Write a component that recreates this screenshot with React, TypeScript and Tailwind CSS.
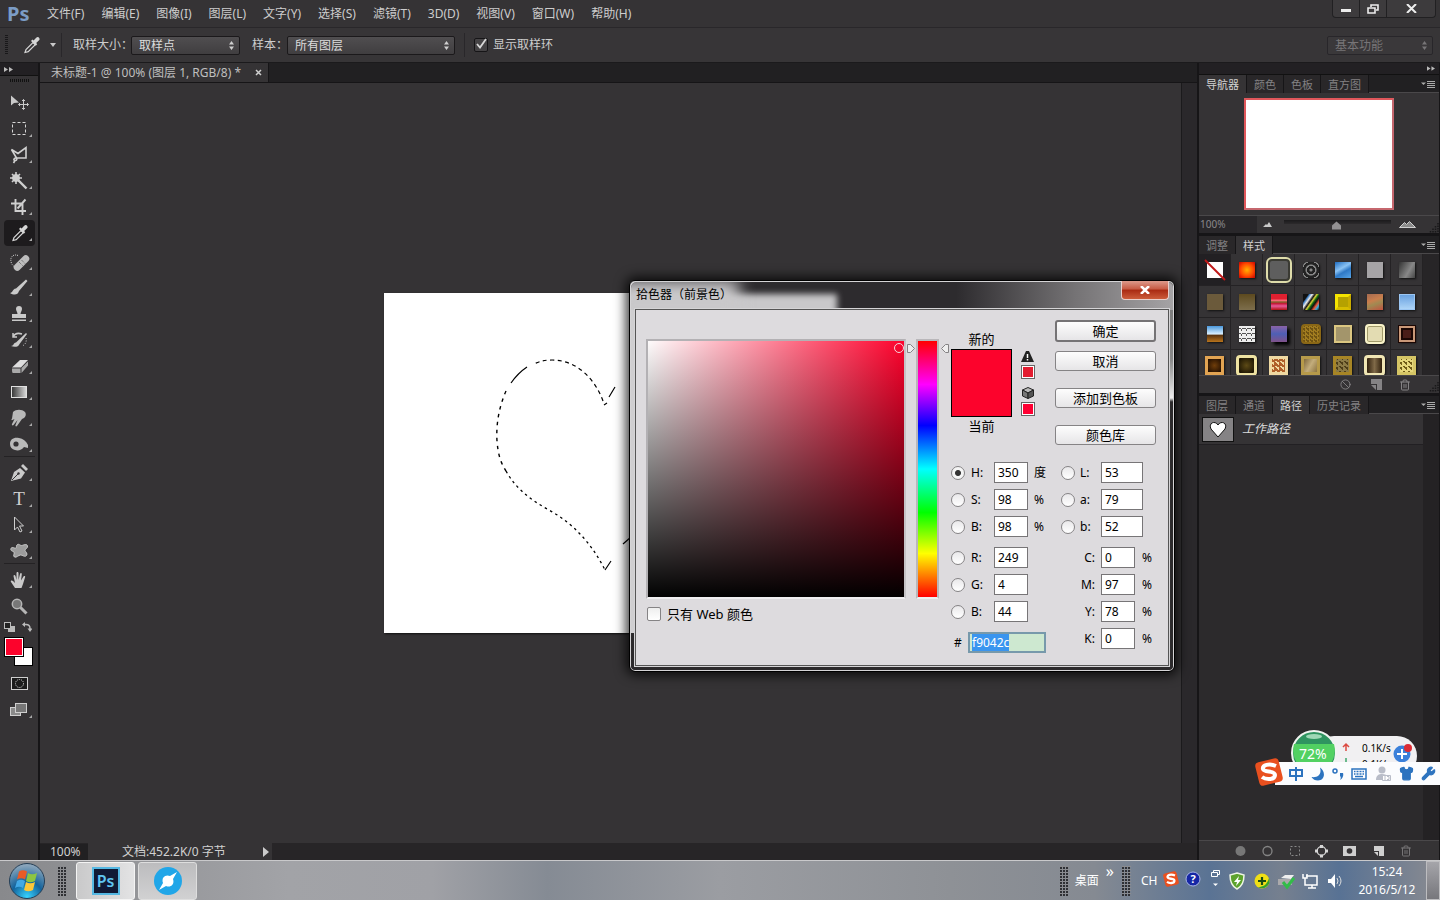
import { useEffect, useRef, type ReactNode } from "react";
import { Ban, Trash2, Wrench, Shirt } from "lucide-react";

const menus = ["文件(F)", "编辑(E)", "图像(I)", "图层(L)", "文字(Y)", "选择(S)", "滤镜(T)", "3D(D)", "视图(V)", "窗口(W)", "帮助(H)"];

const Dropper = () => (
  <g>
    <path d="M9 20.5l1-3 7-7 2.2 2.2-7 7z" fill="none" stroke="#d6d6d6" strokeWidth="1.2" />
    <path d="M15 9l1.4-1.4 1.2 1 2.6-2.8c1-1 2.4-1 3 .1.7.9.4 2-.4 2.7l-2.6 2.4 1 1.2-1.4 1.5z" fill="#d6d6d6" />
  </g>
);

type Tool = { name: string; icon: ReactNode; selected?: boolean; plain?: boolean; line?: boolean };

const tools: Tool[] = [
  {
    name: "移动",
    plain: true,
    icon: (
      <g>
        <path d="M7 5.500v10l3-2.600 5-.400z" fill="#c9c9c9" />
        <path d="M19.500 9.500v10M14.500 14.500h10M18 11l1.500-1.500L21 11M18 18l1.500 1.500L21 18M16 13l-1.500 1.500L16 16M23 13l1.500 1.500L23 16" fill="none" stroke="#c9c9c9" />
      </g>
    ),
  },
  { name: "选框", icon: <rect x="8.5" y="6.5" width="13" height="12" fill="none" stroke="#d6d6d6" strokeDasharray="3 2" /> },
  { name: "套索", icon: <path d="M7.500 7.500l6.500 4 8-6v10.500h-9.500zM12.500 16c-3-.500-3.500 3-1 2.500 1.500-.500 1.500-1.500 1-2.500M11 18.500l-1.500 2.500" fill="none" stroke="#d0d0d0" strokeWidth="1.6" /> },
  {
    name: "魔棒",
    icon: (
      <g stroke="#cfcfcf">
        <path d="M12 4v12M6 10h12M8 6l8 8M16 6l-8 8" strokeWidth="1.600" />
        <circle cx="12" cy="10" r="3.500" fill="#cfcfcf" />
        <path d="M14.500 12.500l8 8" strokeWidth="2.400" />
      </g>
    ),
  },
  { name: "裁剪", icon: <path d="M7 9.500h11.500V21M11.500 5v12H22M13.500 14.500l8-9" fill="none" stroke="#cfcfcf" strokeWidth="1.900" /> },
  { name: "吸管", selected: true, icon: <Dropper /> },
  {
    name: "修复",
    icon: (
      <g>
        <path d="M14 6.500c-5-2-8 2-7 6 .500 3 2 4 3 5" fill="none" stroke="#cdcdcd" strokeDasharray="1 1" />
        <rect x="8" y="10.500" width="19" height="7" rx="3.500" transform="rotate(-45 17.500 14)" fill="#bdbdbd" />
        <path d="M15 13l3.500 3.500M17.500 11l3.500 3.500M14 17h.1M21 10h.1" stroke="#555" strokeDasharray="1 1" />
      </g>
    ),
  },
  { name: "画笔", icon: <path d="M6 18c3 0 2-4 6-4.500l10-9 1.500 1.500L15 16c-1 4-5 4.500-9 2z" fill="#c9c9c9" /> },
  { name: "图章", icon: <path d="M15 5a3 3 0 0 1 3 3c0 2-1.500 3-1.500 5H22v4H8v-4h5.500c0-2-1.500-3-1.500-5a3 3 0 0 1 3-3zM8 18.500h14V20H8z" fill="#c9c9c9" /> },
  {
    name: "历史画笔",
    icon: (
      <g>
        <path d="M7 19c3 0 2-3 5-3.500L22 6l1 1-7.500 10c-1 3-5 3.500-8.500 2z" fill="#c9c9c9" />
        <path d="M9 10c2-4 6-4 9-3M9 6v4h4" fill="none" stroke="#c9c9c9" strokeWidth="1.500" />
        <path d="M22 11c1 4-1 7-4 8" fill="none" stroke="#c9c9c9" strokeDasharray="1 1.500" />
      </g>
    ),
  },
  {
    name: "橡皮擦",
    icon: (
      <g>
        <path d="M8 14.500L16 7h8l-7 7.500z" fill="#dedede" />
        <path d="M8 15.500h8.500V20H9c-1 0-1-2-1-4.500zM17.500 15L24 8.500v4L17.500 20z" fill="#a9a9a9" />
      </g>
    ),
  },
  { name: "渐变", icon: <rect x="7.500" y="7.500" width="15" height="11" fill="url(#toolFade)" stroke="#e0e0e0" /> },
  { name: "涂抹", icon: <path d="M9 7c3-3 9-3 12 0 2 3 0 6-3 7l-5 7c-1 1-2 0-1.500-1l2-5-4 5c-1 1-2 0-1.500-1l2.500-5-2 1c-1 .500-1.500-.500-.500-1.500z" fill="#b9b9b9" /> },
  {
    name: "减淡",
    icon: (
      <g>
        <path d="M6 13c0-5 4-7 9-6 4 .500 7 3 9 7v3l-4-1c-2 3-6 4-9 3-3-.500-5-3-5-6z" fill="#b9b9b9" />
        <circle cx="12" cy="13" r="2.600" fill="#353335" />
      </g>
    ),
    line: true,
  },
  {
    name: "钢笔",
    icon: (
      <g>
        <path d="M7 21l3-9 6-4 5 4.500-4 6z" fill="#c9c9c9" />
        <path d="M17 6l2-2 5 5-2 2z" fill="#c9c9c9" />
        <path d="M8 20l6-6" stroke="#353335" />
        <circle cx="14.500" cy="13.500" r="1.200" fill="#353335" />
      </g>
    ),
  },
  { name: "文字", icon: <text x="15" y="19" textAnchor="middle" fontSize="19" fontFamily="Liberation Serif, serif" fill="#d0d0d0">T</text> },
  { name: "路径选择", icon: <path d="M10.500 5v13l3-3 2.500 5 2-1-2.500-5h4z" fill="none" stroke="#cfcfcf" /> },
  { name: "形状", line: true, icon: <path d="M13 7c1.500-2 3.500 1 5 .500s5-2 5.500.500-3 3-2.500 4.500 3 3 1.500 5-4-.500-6-.500-4 3-6 2 .500-4-.500-5-4-1-3-3.500 4 .500 5-.500 0-2 1-3z" fill="#9c9c9c" stroke="#c9c9c9" /> },
  { name: "抓手", icon: <path d="M11 21l-4-6c-1-1.500 1-2 2-1l2 2-1.500-7c0-1.500 1.500-1.500 2 0l1 4V6c0-1.500 2-1.500 2 0v7l1.500-6c.500-1.500 2-1 1.800.500l-.800 6 2.500-4c1-1 2.200-.300 1.500 1L19 17l-1.500 4z" fill="#c9c9c9" /> },
  {
    name: "缩放",
    plain: true,
    icon: (
      <g>
        <path d="M16.500 14.500l6 6" stroke="#b5b5b5" strokeWidth="3" />
        <circle cx="13" cy="11" r="4.700" fill="#777" stroke="#b5b5b5" strokeWidth="1.500" />
      </g>
    ),
  },
];

const styleSwatches = [
  "bg-[radial-gradient(#ffb000,#ff4a00_55%,#c80000)]",
  "bg-[#5e5e5e] border-2 border-[#3a3a33] outline-2 outline-[#dedcaa] size-[22px] rounded-sm",
  "bg-[repeating-radial-gradient(circle,#888_0_1px,#222_2px_4px)] rounded-sm",
  "bg-[linear-gradient(150deg,#1e6cc0,#8ac2f3_40%,#2e79c7_60%,#58a5e8)]",
  "bg-[#a6a4a6]",
  "bg-[linear-gradient(120deg,#333,#888_60%,#444)]",
  "bg-[#6b5a3b]",
  "bg-[linear-gradient(#5d4a1f,#7d6e4c)]",
  "bg-[linear-gradient(#e02030_30%,#ff6a7a_40%,#80652a_50%,#c81838_60%,#e85b9a_75%,#b01010)]",
  "bg-[linear-gradient(125deg,#111_20%,#3a7ac0_25%,#eee_35%,#111_45%,#ddd33a_52%,#161_60%,#111_68%,#e53_78%,#3ad_88%,#111)]",
  "bg-[#b5a100] border-[3px] border-[#f5e400] border-r-[#c9ac00] border-b-[#d7bd00]",
  "bg-[linear-gradient(160deg,#a56a50,#c97f4d_40%,#a08a52_60%,#c2523f)]",
  "bg-[linear-gradient(#6aa2e0,#add4f7)] border border-[#9cc6f2]",
  "bg-[linear-gradient(#4a98dc,#d9efff_50%,#5a3410_58%,#b9741c)]",
  "bg-[repeating-conic-gradient(#eee_0_19%,#555_20%_27%)] bg-size-[5px_5px]",
  "bg-[linear-gradient(#8a63a8,#4d5fb5_50%,#80528a)] shadow-[3px_3px_3px_#000]",
  "bg-[repeating-conic-gradient(#a17c20_0_18%,#6f5212_19%_35%)] bg-size-[4px_4px] border-2 border-[#8a6716] size-5 rounded-sm",
  "bg-[#a3956b] border-2 border-[#dbc681] size-[18px]",
  "bg-[#e3dcb2] border-2 border-[#f8f2c8] size-5 rounded-sm inset-ring-1 inset-ring-[#a19a6a]",
  "bg-[#4a1d18] border-2 border-[#c99878] outline-1 outline-[#1b0704] inset-ring-2 inset-ring-[#1b0704]",
  "bg-[radial-gradient(#6f3d0a,#1d0c00)] border-[3px] border-[#e2a452] size-[19px]",
  "bg-[radial-gradient(#5d4a16,#130d00)] border-[3px] border-[#eee2a2] size-[21px] rounded-sm",
  "bg-[repeating-conic-gradient(#b0602a_0_18%,#f0d9a0_19%_35%)] bg-size-[5px_5px] border-[3px] border-[#efd9a2] size-[19px]",
  "bg-[linear-gradient(120deg,#81693c,#c3ad7c_50%,#8d7440)] border-[3px] border-[#b69a4a] size-[19px]",
  "bg-[repeating-conic-gradient(#8b7a45_0_18%,#4e3e18_19%_35%)] bg-size-[5px_5px] border-[3px] border-[#a78525] size-[19px]",
  "bg-[linear-gradient(90deg,#31210e,#806a48_50%,#31210e)] border-[3px] border-[#f0e6b4] size-[21px] rounded-sm",
  "bg-[repeating-conic-gradient(#e6d77b_0_18%,#6f5b17_19%_35%)] bg-size-[5px_5px] border-[3px] border-[#d5c565] size-[19px]",
];

function UpDown({ color }: { color: string }) {
  return (
    <svg className="pointer-events-none absolute right-1.5 top-[5px]" width="5" height="9" viewBox="0 0 5 9" fill={color}>
      <path d="M2.500 0L5 3.500H0zM2.500 9L5 5.500H0z" />
    </svg>
  );
}

function BarSelect({ id, value, width, muted }: { id: string; value: string; width: string; muted?: boolean }) {
  return (
    <div className={`relative ${width}`}>
      <select
        id={id}
        aria-label={value}
        className={`block h-[19px] w-full appearance-none rounded-[2px] border pl-[7px] text-xs leading-[18px] outline-none ${
          muted ? "border-[#28262a] bg-[#3a383a] text-[#777577]" : "border-[#1b191b] bg-linear-to-b from-[#504e50] to-[#403e40] text-[#dcdcdc]"
        }`}
      >
        <option>{value}</option>
      </select>
      <UpDown color={muted ? "#777577" : "#cfcfcf"} />
    </div>
  );
}

function Grip({ className = "" }: { className?: string }) {
  return <div className={`h-[30px] w-[9px] bg-[linear-gradient(#8b8c90_1px,transparent_1px),linear-gradient(90deg,#2f3034_2px,transparent_2px)] bg-size-[3px_3px] ${className}`} />;
}

function Tabs({ items, active }: { items: string[]; active: string }) {
  return (
    <div className="flex h-[18px] shrink-0 border-b border-[#4a484a] bg-[#212022] text-[11px] leading-[17px]">
      {items.map((item) => (
        <button
          key={item}
          className={`h-[18px] border-r border-[#161517] px-[7px] ${item === active ? "bg-[#353335] text-[#d2d2d2]" : "bg-[#292729] text-[#838183]"}`}
        >
          {item}
        </button>
      ))}
      <svg className="ml-auto mr-1 mt-1.5" width="14" height="7" viewBox="0 0 14 7">
        <path d="M0 1.500h5L2.500 4z" fill="#aaa" />
        <path d="M6 .5h8M6 2.500h8M6 4.500h8M6 6.500h8" stroke="#aaa" />
      </svg>
    </div>
  );
}

function ResizeDots() {
  return (
    <svg width="10" height="10" viewBox="0 0 10 10" fill="none" stroke="#19181a" strokeWidth="1.500" strokeDasharray="1.500 1">
      <path d="M9 0v10M6.500 3v7M4 5.500V10M1.500 8v2" />
    </svg>
  );
}

function NewPage({ color }: { color: string }) {
  return (
    <svg width="11" height="11" viewBox="0 0 11 11" fill={color}>
      <path d="M0 0h11v11H6V5H0zM0 6h5v5z" />
    </svg>
  );
}

function MenuBar() {
  return (
    <header className="flex h-7 shrink-0 items-center border-b border-[#29272a] bg-[#353335]">
      <span className="w-[39px] pl-[7px] text-xl leading-6 font-bold text-[#7b9cc6]">Ps</span>
      <nav className="flex gap-px text-xs text-[#cdcdcd]">
        {menus.map((m) => (
          <button key={m} className="px-2">
            {m}
          </button>
        ))}
      </nav>
      <div className="mr-1 ml-auto flex h-[18px] self-start overflow-hidden rounded-b-sm border border-t-0 border-[#212022] bg-[#3d3b3d]">
        <button aria-label="最小化" className="flex w-[27px] items-center justify-center border-r border-[#212022]">
          <span className="mt-1 h-[3px] w-2.5 bg-[#ededed]" />
        </button>
        <button aria-label="还原" className="flex w-[27px] items-center justify-center border-r border-[#212022]">
          <svg width="12" height="10" viewBox="0 0 12 10" fill="none" stroke="#ededed" strokeWidth="1.600">
            <path d="M4 3V1h7v5H9M1 4h7v5H1z" />
          </svg>
        </button>
        <button aria-label="关闭" className="flex w-12 items-center justify-center">
          <svg width="11" height="9" viewBox="0 0 11 9" stroke="#ededed" strokeWidth="2">
            <path d="M1 0l9 9M10 0L1 9" />
          </svg>
        </button>
      </div>
    </header>
  );
}

function OptionsBar() {
  return (
    <div className="flex h-[35px] shrink-0 items-center border-b border-[#1b1a1c] bg-[#373537] text-xs whitespace-nowrap text-[#cdcdcd]">
      <div className="ml-[5px] h-5 w-[3px] bg-[repeating-linear-gradient(#19181a_0_1px,transparent_1px_2px)]" />
      <svg className="ml-2" width="32" height="26" viewBox="0 0 32 26">
        <Dropper />
      </svg>
      <svg className="ml-0.5" width="6" height="4" viewBox="0 0 6 4" fill="#c9c9c9">
        <path d="M0 0h6L3 4z" />
      </svg>
      <div className="ml-[5px] mr-[11px] h-6 w-px bg-[#29272a]" />
      <label htmlFor="sample-size" className="w-[58px]">取样大小：</label>
      <BarSelect id="sample-size" value="取样点" width="w-[109px]" />
      <label htmlFor="sample-layer" className="ml-3 w-[35px]">样本：</label>
      <BarSelect id="sample-layer" value="所有图层" width="w-[168px]" />
      <div className="mx-[9px] h-6 w-px bg-[#29272a]" />
      <label className="flex items-center gap-[5px]">
        <span className="relative flex">
          <input type="checkbox" defaultChecked className="size-3.5 appearance-none rounded-[2px] border border-[#161517] bg-[#454345]" />
          <svg className="pointer-events-none absolute left-0.5 top-0" width="12" height="11" viewBox="0 0 12 11" fill="none" stroke="#d8d8d8" strokeWidth="1.800">
            <path d="M1 6l3 3.500L10 1" />
          </svg>
        </span>
        显示取样环
      </label>
      <div className="ml-auto mr-[7px]">
        <BarSelect id="workspace" value="基本功能" width="w-[106px]" muted />
      </div>
    </div>
  );
}

function Toolbar() {
  return (
    <aside className="flex w-10 shrink-0 flex-col border-r-2 border-[#161517] bg-[#353335]">
      <div className="h-[13px] border-b border-[#111] bg-[#222023] pl-1 pt-1">
        <svg width="9" height="5" viewBox="0 0 9 5" fill="#bbb">
          <path d="M0 0l4 2.500L0 5zM5 0l4 2.500L5 5z" />
        </svg>
      </div>
      <div className="mx-auto mt-[3px] mb-2 h-[3px] w-[19px] bg-[repeating-linear-gradient(90deg,#111_0_1px,transparent_1px_2px)]" />
      <svg className="absolute size-0">
        <linearGradient id="toolFade">
          <stop stopColor="#333" />
          <stop offset="1" stopColor="#ddd" />
        </linearGradient>
      </svg>
      {tools.map((t) => (
        <button
          key={t.name}
          aria-label={t.name}
          className={`mx-1 h-[26px] w-[31px] shrink-0 ${t.selected ? "mb-[3px] rounded-sm bg-[#1d1b1d]" : ""} ${t.line ? "mb-[3px]" : ""}`}
        >
          <svg width="31" height="26" viewBox="0 0 31 26">
            {t.icon}
            {!t.plain && <path d="M28 18v3h-3z" fill="#a9a9a9" />}
            {t.line && <path d="M0 25.500h31" stroke="#242224" />}
          </svg>
        </button>
      ))}
      <div className="mt-[3px] flex items-center justify-between pl-1 pr-1.5">
        <svg width="11" height="10" viewBox="0 0 11 10">
          <path d="M5 4h6v6H4V7h3z" fill="#bbb" />
          <rect x=".5" y=".5" width="6" height="6" fill="#222" stroke="#bbb" />
        </svg>
        <svg width="10" height="10" viewBox="0 0 10 10">
          <path d="M2 2.500h2q4 0 4 4v1" fill="none" stroke="#bbb" strokeWidth="1.500" />
          <path d="M3 0v5L0 2.500zM5.500 6.500h5L8 10z" fill="#bbb" />
        </svg>
      </div>
      <div className="relative mt-1.5 h-7">
        <button aria-label="背景色" className="absolute left-3.5 top-[9px] size-[19px] border border-black bg-white" />
        <button aria-label="前景色" className="absolute left-[5px] top-0 size-[18px] border border-white bg-[#fc032c] outline-1 outline-black" />
      </div>
      <button aria-label="快速蒙版" className="mx-auto mt-[11px] h-[13px] w-[17px]">
        <svg width="17" height="13" viewBox="0 0 17 13">
          <rect x=".5" y=".5" width="16" height="12" fill="#1b1b1b" stroke="#cfcfcf" />
          <circle cx="8.500" cy="6.500" r="4" fill="none" stroke="#e0e0e0" strokeDasharray="1 1" />
        </svg>
      </button>
      <button aria-label="屏幕模式" className="mx-1 mt-[7px] h-[26px] w-[31px]">
        <svg width="31" height="26" viewBox="0 0 31 26">
          <rect x="6.500" y="10.500" width="10" height="8" fill="#8a8a8a" stroke="#cfcfcf" />
          <rect x="11.500" y="6.500" width="11" height="9" fill="#777" stroke="#cfcfcf" />
          <path d="M28 18v3h-3z" fill="#a9a9a9" />
        </svg>
      </button>
    </aside>
  );
}

function DocumentArea() {
  return (
    <main className="flex min-w-0 flex-1 flex-col bg-[#353335]">
      <div className="flex h-5 shrink-0 border-b border-[#161517] bg-[#212022] text-xs text-[#bfbfbf]">
        <div className="flex w-[229px] items-center justify-between border-r border-[#161517] bg-[#353335] pl-[11px] pr-1.5 whitespace-nowrap">
          未标题-1 @ 100% (图层 1, RGB/8) *
          <button aria-label="关闭文档">
            <svg width="7" height="7" viewBox="0 0 7 7" stroke="#cfcfcf" strokeWidth="1.500">
              <path d="M1 1l5 5M6 1L1 6" />
            </svg>
          </button>
        </div>
      </div>
      <div className="flex min-h-0 flex-1">
        <div className="flex flex-1 items-center justify-center overflow-hidden">
          <svg className="bg-white shadow-[1px_1px_2px_#111]" width="454" height="340" viewBox="0 0 454 340" fill="none" stroke="#000">
            <path d="M143 74q-9 6-16 16M221 277l6-9M239 251l8-7M225 104l6-10M220 112l3-2" strokeWidth="1.200" />
            <path d="M219 108C211 86 193 67 168 67c-7 0-12 1-18 4" strokeWidth="1.200" strokeDasharray="4 3.500" />
            <path d="M122 98c-7 16-10 33-9 50 1 12 3 21 9 30" strokeWidth="1.400" strokeDasharray="3.500 4.500" />
            <path d="M122 178c10 18 25 29 43 39 25 14 43 34 56 60" strokeWidth="1.300" strokeDasharray="2.500 3.500" />
          </svg>
        </div>
        <div className="w-4 border-l border-[#1b1a1c] bg-[#2a282b]" />
      </div>
      <div className="flex h-[17px] shrink-0 items-center bg-[#272527] text-xs leading-4 text-[#d0d0d0]">
        <span className="w-12 bg-[#212022] pl-2.5">100%</span>
        <span className="flex h-full w-[184px] items-center bg-[#353335] pl-[34px]">
          文档:452.2K/0 字节
          <svg className="ml-auto mr-[3px]" width="6" height="10" viewBox="0 0 6 10" fill="#ccc">
            <path d="M0 0l6 5-6 5z" />
          </svg>
        </span>
      </div>
    </main>
  );
}

function Panels() {
  return (
    <aside className="flex w-[243px] shrink-0 flex-col gap-[3px] border-x border-l-2 border-[#161517] bg-[#161517]">
      <section className="flex h-[170px] flex-col bg-[#353335]">
        <div className="h-3 border-b border-[#111] bg-[#222023] pr-1 pt-[3px]">
          <svg className="ml-auto" width="8" height="5" viewBox="0 0 9 5" fill="#bbb">
            <path d="M0 0l4 2.500L0 5zM5 0l4 2.500L5 5z" />
          </svg>
        </div>
        <Tabs items={["导航器", "颜色", "色板", "直方图"]} active="导航器" />
        <div className="flex flex-1 items-center justify-center">
          <div className="h-28 w-[150px] border-2 border-[#e0575b] border-r-[#c5676e] border-b-[#c5676e] bg-white" />
        </div>
        <div className="flex h-[18px] items-center border-t border-[#4a484a]">
          <span className="h-full w-[58px] bg-[#29272a] pl-px text-[10px] leading-4 text-[#8a888a]">100%</span>
          <svg className="ml-1.5" width="9" height="5" viewBox="0 0 9 5" fill="#c9c9c9">
            <path d="M0 5l3-3 1 1 2-3 3 5z" />
          </svg>
          <input
            type="range"
            aria-label="缩放"
            defaultValue="49"
            className="ml-3 h-2.5 w-[107px] appearance-none bg-[linear-gradient(#1b1a1c,#2c2a2c)] bg-size-[100%_4px] bg-no-repeat [&::-webkit-slider-thumb]:h-2.5 [&::-webkit-slider-thumb]:w-[9px] [&::-webkit-slider-thumb]:appearance-none [&::-webkit-slider-thumb]:bg-[#929092] [&::-webkit-slider-thumb]:[clip-path:polygon(50%_20%,100%_60%,100%_100%,0_100%,0_60%)]"
          />
          <svg className="ml-2" width="17" height="7" viewBox="0 0 17 7" fill="#8a8a8a" stroke="#d0d0d0">
            <path d="M.5 6.500l5-5 2 2 3-3 6 6z" />
          </svg>
          <div className="ml-auto mt-1.5">
            <ResizeDots />
          </div>
        </div>
      </section>

      <section className="flex h-[157px] flex-col bg-[#353335]">
        <Tabs items={["调整", "样式"]} active="样式" />
        <div className="flex min-h-0 flex-1">
          <div className="grid w-[224px] auto-rows-[32px] grid-cols-7 overflow-hidden">
            <button aria-label="无样式" className="flex items-center justify-center border-r border-b border-[#242224] bg-[#222023]">
              <svg width="22" height="22" viewBox="0 0 22 22">
                <path d="M3 3h16v16H3z" fill="#fff" />
                <path d="M1 1l20 20" stroke="#c01818" strokeWidth="2" />
              </svg>
            </button>
            {styleSwatches.map((s, i) => (
              <button key={i} aria-label={`样式 ${i + 1}`} className="flex items-center justify-center border-r border-b border-[#242224]">
                <span className={`block size-4 shadow-[1px_1px_2px_#111] ${s}`} />
              </button>
            ))}
          </div>
          <div className="flex-1 bg-[#272527]" />
        </div>
        <div className="flex h-[18px] items-center justify-end border-t border-[#4a484a] text-[#858385]">
          <Ban size={11} />
          <span className="ml-5">
            <NewPage color="#858385" />
          </span>
          <Trash2 className="ml-[17px]" size={12} />
          <span className="mt-1 ml-[18px]">
            <ResizeDots />
          </span>
        </div>
      </section>

      <section className="flex min-h-0 flex-1 flex-col bg-[#2c2a2c]">
        <Tabs items={["图层", "通道", "路径", "历史记录"]} active="路径" />
        <div className="flex flex-1">
          <div className="w-[224px]">
            <div className="flex h-[31px] items-center border-b border-[#222023] bg-[#353335] pl-[3px]">
              <svg width="32" height="25" viewBox="0 0 32 25">
                <rect x=".5" y=".5" width="31" height="24" fill="#858385" stroke="#111" />
                <path d="M16 20l-7-8c-3-6 4-9 7-4 3-5 10-2 7 4z" fill="#fff" stroke="#111" />
              </svg>
              <span className="ml-2 text-xs text-[#dcdcdc] italic">工作路径</span>
            </div>
          </div>
          <div className="flex-1 bg-[#242224]" />
        </div>
        <div className="flex h-5 items-center border-t border-[#4a484a] bg-[#353335] pl-9 pr-[27px]">
          <svg width="152" height="14" viewBox="0 0 152 14" fill="none">
            <circle cx="5.500" cy="7" r="5" fill="#777" />
            <circle cx="32.500" cy="7" r="4.500" stroke="#858585" strokeWidth="1.300" />
            <rect x="55.500" y="2.500" width="9" height="9" stroke="#8a8a8a" strokeDasharray="2 2" />
            <circle cx="86.500" cy="7" r="4.300" stroke="#d6d6d6" strokeWidth="1.300" />
            <path d="M85 1h3v3h-3zM85 10.500h3v3h-3zM80 5.500h3v3h-3zM90 5.500h3v3h-3z" fill="#d6d6d6" />
            <path d="M108 2h13v10h-13z" fill="#cfcfcf" />
            <circle cx="114.500" cy="7" r="2.800" fill="#353335" />
            <path d="M139 2h10v10h-5V7h-5zM139 8h4v4z" fill="#cfcfcf" />
          </svg>
          <Trash2 className="ml-auto text-[#777577]" size={12} />
        </div>
      </section>
    </aside>
  );
}

function Radio({ id, checked }: { id: string; checked?: boolean }) {
  return (
    <input
      id={id}
      type="radio"
      name="channel"
      defaultChecked={checked}
      className="size-3.5 appearance-none rounded-full border border-[#858385] bg-linear-to-b from-[#e9e8ea] to-white checked:bg-[radial-gradient(#333_2.500px,#f5f5f5_3.500px)]"
    />
  );
}

type FieldProps = { label: string; id: string; value: string; unit?: string; radio?: boolean; checked?: boolean };

function LeftField({ label, id, value, unit, checked }: FieldProps) {
  return (
    <div className="flex h-[21px] items-center">
      <Radio id={`${id}-radio`} checked={checked} />
      <label htmlFor={id} className="ml-1.5 w-[23px]">{label}:</label>
      <input id={id} defaultValue={value} className="h-[21px] w-[34px] border border-[#777577] bg-white pl-[3px] outline-none" />
      <span className="ml-1.5">{unit}</span>
    </div>
  );
}

function RightField({ label, id, value, unit, radio }: FieldProps) {
  return (
    <div className="flex h-[21px] items-center">
      <span className="flex w-3.5">{radio && <Radio id={`${id}-radio`} />}</span>
      <label htmlFor={id} className={`w-[26px] ${radio ? "pl-[5px]" : "pr-1.5 text-right"}`}>{label}:</label>
      <input id={id} defaultValue={value} className={`h-[21px] border border-[#777577] bg-white pl-[3px] outline-none ${radio ? "w-[42px]" : "w-[34px]"}`} />
      <span className="ml-[7px]">{unit}</span>
    </div>
  );
}

const dialogButton = "h-5 w-[101px] rounded-[3px] border border-[#858385] bg-linear-to-b from-[#fdfdfd] to-[#e6e5e7] leading-4";

function ColorPicker() {
  const hex = useRef<HTMLInputElement>(null);
  useEffect(() => {
    hex.current?.focus();
    hex.current?.select();
  }, []);

  return (
    <section
      role="dialog"
      aria-labelledby="picker-title"
      className="absolute right-[265px] top-[280px] w-[546px] rounded-md border border-black bg-[linear-gradient(90deg,#cfced0_50%,transparent_50%),linear-gradient(#777_0,#888_20%,#eee_30%,#2c2a2c_31%)] bg-size-[100%_352px,100%_100%] bg-no-repeat px-[5px] pb-[5px] text-xs text-black shadow-[0_0_12px_3px_#000c] inset-shadow-[0_0_0_1px_#d5d4d6]"
    >
      <div className="absolute inset-x-px top-px h-7 overflow-hidden rounded-t-md bg-[linear-gradient(90deg,#2d2b2e_60%,#757375_82%,#a5a3a5)]">
        <div className="absolute top-3 -left-2 h-8 w-[214px] bg-[#c9c8ca] blur-[3px]" />
        <div className="absolute -top-0.5 -left-4 h-9 w-[124px] bg-[#c9c8ca] blur-[8px]" />
      </div>
      <div className="absolute inset-x-px bottom-px h-[5px] rounded-b-md bg-[#2c2a2c]" />
      <div className="relative flex h-7 items-center justify-between">
        <h2 id="picker-title" className="pl-px">拾色器（前景色）</h2>
        <button aria-label="关闭" className="flex h-[19px] w-12 items-center justify-center self-start rounded-b-sm border border-t-0 border-[#e9cfcb] bg-[linear-gradient(#dd9a8b,#c85a43_45%,#a92a12_50%,#cc5c3b)]">
          <svg width="10" height="8" viewBox="0 0 10 8" stroke="#fff" strokeWidth="2.500">
            <path d="M1 0l8 8M9 0L1 8" />
          </svg>
        </button>
      </div>
      <div className="relative flex border border-[#555] bg-[#dddbde] pb-3 pl-2.5 pt-2.5 outline-1 outline-[#d5d4d6]">
        <div className="pt-[19px]">
          <div className="relative size-[260px] overflow-hidden border-2 border-[#b3b1b4] border-r-[#c5c3c6] border-b-[#efeef0] bg-[linear-gradient(0deg,#000,transparent),linear-gradient(90deg,#fff,#ff002b)] bg-origin-border">
            <div className="absolute left-[246px] top-0.5 size-2.5 rounded-full border border-[#f3d5da]" />
          </div>
          <label className="mt-[7px] ml-px flex items-center gap-1.5 text-[13px] leading-4">
            <input type="checkbox" className="size-3.5 appearance-none rounded-[2px] border border-[#858385] bg-linear-to-b from-[#eee] to-white" />
            只有 Web 颜色
          </label>
        </div>
        <div className="relative mx-[10px] pt-[19px]">
          <input
            type="range"
            aria-label="色相"
            min="0"
            max="360"
            defaultValue="350"
            className="block h-[260px] w-[23px] appearance-none border-2 border-[#b9b7ba] border-b-[#efeef0] bg-[linear-gradient(#f00,#f0f_17%,#00f_33%,#0ff_50%,#0f0_67%,#ff0_83%,#f00)] [direction:rtl] [writing-mode:vertical-lr] [&::-webkit-slider-thumb]:appearance-none"
          />
          <svg className="absolute top-6 -left-[9px]" width="42" height="9" viewBox="0 0 42 9" fill="#eee" stroke="#858385">
            <path d="M.5.5h3l4 4-4 4h-3zM41.500.5h-3l-4 4 4 4h3z" />
          </svg>
        </div>
        <div className="ml-0.5">
          <div className="flex h-[125px]">
            <div className="flex w-[61px] flex-col items-center pt-[11px] text-[13px] leading-4">
              新的
              <div className="mt-0.5 h-[68px] w-[61px] shrink-0 border border-black bg-[#fc032c]" />
              <span className="mt-px">当前</span>
            </div>
            <div className="ml-2 flex w-[15px] flex-col items-center pt-[31px]">
              <svg className="shrink-0" width="13" height="11" viewBox="0 0 13 11">
                <path d="M5 0h3l5 11H0z" fill="#222" />
                <path d="M6.500 3v4M6.500 8v1.500" stroke="#fff" strokeWidth="1.500" />
              </svg>
              <button aria-label="打印色" className="mt-[3px] size-3.5 shrink-0 border border-[#666] bg-[#e31c30] inset-ring-1 inset-ring-white" />
              <svg className="mt-2 shrink-0" width="12" height="12" viewBox="0 0 12 12" stroke="#222">
                <path d="M6 .5L11.500 3 6 6 .5 3z" fill="#bbb" />
                <path d="M.5 3L6 6v5.500L.5 9z" fill="#777" />
                <path d="M11.500 3L6 6v5.500L11.500 9z" fill="#555" />
              </svg>
              <button aria-label="Web 安全色" className="mt-[3px] size-3.5 shrink-0 border border-[#666] bg-[#ff0033] inset-ring-1 inset-ring-white" />
            </div>
            <div className="ml-5 flex flex-col text-[13px]">
              <button className="h-[22px] w-[101px] rounded-[3px] border-2 border-[#757375] bg-linear-to-b from-[#fdfdfd] to-[#e6e5e7] leading-4">确定</button>
              <button className={`mt-[9px] ${dialogButton}`}>取消</button>
              <button className={`mt-[17px] ${dialogButton}`}>添加到色板</button>
              <button className={`mt-[17px] ${dialogButton}`}>颜色库</button>
            </div>
          </div>
          <div className="mt-[17px] flex">
            <div className="flex w-[110px] flex-col gap-2.5">
              <div className="flex flex-col gap-1.5">
                <LeftField label="H" id="hsb-h" value="350" unit="度" checked />
                <LeftField label="S" id="hsb-s" value="98" unit="%" />
                <LeftField label="B" id="hsb-b" value="98" unit="%" />
              </div>
              <div className="flex flex-col gap-1.5">
                <LeftField label="R" id="rgb-r" value="249" />
                <LeftField label="G" id="rgb-g" value="4" />
                <LeftField label="B" id="rgb-b" value="44" />
              </div>
              <div className="flex items-center pl-[3px]">
                <label htmlFor="hex" className="w-3.5">#</label>
                <input
                  id="hex"
                  ref={hex}
                  defaultValue="f9042c"
                  className="h-[21px] w-[78px] border-2 border-[#7799ab] bg-[#cde8d0] pl-0.5 leading-4 outline-none selection:bg-[#3a95ef] selection:text-white"
                />
              </div>
            </div>
            <div className="flex flex-col gap-2.5">
              <div className="flex flex-col gap-1.5">
                <RightField label="L" id="lab-l" value="53" radio />
                <RightField label="a" id="lab-a" value="79" radio />
                <RightField label="b" id="lab-b" value="52" radio />
              </div>
              <div className="flex flex-col gap-1.5">
                <RightField label="C" id="cmyk-c" value="0" unit="%" />
                <RightField label="M" id="cmyk-m" value="97" unit="%" />
                <RightField label="Y" id="cmyk-y" value="78" unit="%" />
                <RightField label="K" id="cmyk-k" value="0" unit="%" />
              </div>
            </div>
          </div>
        </div>
      </div>
    </section>
  );
}

function SogouMark({ size }: { size: number }) {
  return (
    <svg width={size} height={size} viewBox="0 0 28 28">
      <rect x="2" y="2" width="24" height="24" rx="4" fill="#e9501f" transform="rotate(-14 14 14)" />
      <path d="M21 8C14 5 7 7 8 11s12 1 12 6-9 5-13 2" fill="none" stroke="#fff" strokeWidth="4" />
    </svg>
  );
}

function FloatingWidgets() {
  return (
    <>
      <div className="absolute right-[23px] top-[730px] h-[46px] w-[126px]">
        <div className="absolute top-1.5 right-0 flex h-10 w-[103px] flex-col rounded-full bg-[#f1f0f2] pl-12 pt-1 text-[10px] leading-4 text-black">
          <span>0.1K/s</span>
          <span>0.1K/s</span>
        </div>
        <svg className="absolute inset-0" width="126" height="46" viewBox="0 0 126 46">
          <circle cx="23" cy="23" r="22" fill="#2f9460" stroke="#f0f4f0" strokeWidth="2" />
          <path d="M3 14h40c4 16-8 29-20 29S-1 30 3 14z" fill="#52d162" />
          <ellipse cx="23" cy="6.500" rx="8" ry="2.500" fill="#9fd8b6" />
          <path d="M55 21v-7M52 17l3-3 3 3" fill="none" stroke="#dc4a42" strokeWidth="1.500" />
          <path d="M55 28v6" stroke="#3da86b" strokeWidth="1.500" />
          <circle cx="111" cy="24" r="8.500" fill="#3b80da" />
          <path d="M111 19v10M106 24h10" stroke="#fff" strokeWidth="2" />
          <circle cx="117" cy="18" r="4" fill="#dc2c35" />
        </svg>
        <span className="absolute left-2 top-3.5 text-sm leading-5 text-white">72%</span>
      </div>
      <div className="absolute right-0 top-[762px] flex h-[23px] w-[165px] items-center justify-between bg-[#fbfcfe] pl-[13px] pr-1 text-[#2c73bf]">
        <svg width="16" height="16" viewBox="0 0 16 16" fill="none" stroke="currentColor" strokeWidth="2">
          <path d="M2 4h12v6H2zM8 1v14" />
        </svg>
        <svg width="14" height="14" viewBox="0 0 14 14" fill="currentColor">
          <path d="M9 .5c6 4 5 13-2 13-3 0-5-1-6.500-3.500C7 11 11 7 9 .5z" />
        </svg>
        <svg width="12" height="14" viewBox="0 0 12 14">
          <circle cx="3" cy="4" r="2" fill="none" stroke="currentColor" strokeWidth="1.500" />
          <path d="M8 6h3c1 3-1 6-3 7 1-2 1-3 0-4z" fill="currentColor" />
        </svg>
        <svg width="16" height="12" viewBox="0 0 16 12" fill="none" stroke="currentColor" strokeWidth="1.500">
          <path d="M1 1h14v10H1zM3 3.500h10M3 6h10M4 8.500h8" strokeDasharray="none" />
          <path d="M5 2v5.500M8 2v5.500M11 2v5.500" stroke="#fbfcfe" strokeWidth="1" />
        </svg>
        <svg width="17" height="16" viewBox="0 0 17 16" fill="#b9bdc8">
          <circle cx="7" cy="4" r="3.500" />
          <path d="M1 14c0-5 3-6 6-6s5 1 6 3v3z" />
          <path d="M7.500 9.500h8v5h-8z" fill="#fff" stroke="#b9bdc8" />
          <path d="M10 10v4M12 10.500h2v3h-2" fill="none" stroke="#b9bdc8" />
        </svg>
        <Shirt size={15} fill="currentColor" />
        <Wrench size={15} fill="currentColor" />
      </div>
      <div className="absolute right-[157px] top-[758px]">
        <SogouMark size={28} />
      </div>
    </>
  );
}

function Taskbar() {
  return (
    <footer className="flex h-10 shrink-0 items-center border-t border-[#c9c9cb] bg-[linear-gradient(90deg,#88898c,#a2a3a7_20%,#a0a1a6_30%,#858b94_38%,#9b9da2_50%,#8e9196_66%,#858a92_76%,#5a7394_84%,#76808f_89%,#587294_93%,#8a8b90)]">
      <button aria-label="开始" className="ml-2 size-[38px]">
        <svg width="38" height="38" viewBox="0 0 38 38">
          <defs>
            <radialGradient id="orb" cy=".95" r=".9">
              <stop stopColor="#37d3ff" />
              <stop offset=".5" stopColor="#13639c" />
              <stop offset="1" stopColor="#8aa5bb" />
            </radialGradient>
          </defs>
          <circle cx="19" cy="19" r="17.500" fill="url(#orb)" stroke="#263f56" />
          <path d="M11 9.500q4-2.500 8 0l-2 8q-4-2.500-8 0z" fill="#e95b26" />
          <path d="M20 11q4 2.500 9 0l-2 8q-5 2.500-9 0z" fill="#8dc541" />
          <path d="M9 19q4-2.500 8 0l-2 7q-4-2.500-8 0z" fill="#42a9e6" />
          <path d="M18 20q4 2.500 9 0l-2 8q-5 2.500-9 0z" fill="#fcc739" />
        </svg>
      </button>
      <Grip className="ml-3" />
      <button aria-label="Photoshop" className="ml-[9px] flex h-[38px] w-[59px] items-center justify-center rounded-[3px] border border-[#f4f4f4] bg-linear-to-r from-[#c9c9ca] to-[#e3e3e4]">
        <span className="flex size-7 items-center justify-center border-2 border-[#55b8e3] bg-[#111a35] text-base leading-5 font-semibold text-[#5fc5f0]">Ps</span>
      </button>
      <button aria-label="浏览器" className="ml-[3px] flex h-[38px] w-[59px] items-center justify-center rounded-[3px] border border-[#dedede] bg-linear-to-b from-[#bcbcbe] to-[#d1d1d2]">
        <svg width="28" height="28" viewBox="0 0 28 28">
          <circle cx="14" cy="14" r="14" fill="#20a6e8" />
          <path d="M23 5l-4 7c2 6-3 9-7 7l-7 4 4-7c-2-6 3-9 7-7z" fill="#fff" />
        </svg>
      </button>
      <div className="ml-auto flex items-center text-xs text-white">
        <Grip />
        <span className="ml-1.5">桌面</span>
        <span className="mb-5 ml-[7px] text-base leading-4">»</span>
        <Grip className="ml-2" />
        <span className="ml-2.5 w-[22px]">CH</span>
        <div className="mb-1 flex items-center">
          <SogouMark size={16} />
          <svg className="ml-1.5" width="16" height="16" viewBox="0 0 16 16">
            <circle cx="8" cy="8" r="7" fill="#1627a5" stroke="#a9b5e5" />
            <text x="8" y="12" textAnchor="middle" fontSize="11" fontWeight="bold" fill="#fff">?</text>
          </svg>
          <svg className="ml-2.5" width="9" height="18" viewBox="0 0 9 18" fill="none" stroke="#fff">
            <path d="M2.500 2V.5h6v4H7M.5 2.500h6v4h-6z" />
            <path d="M2 13.500h5L4.500 16z" fill="#fff" stroke="none" />
          </svg>
        </div>
        <svg className="ml-2" width="120" height="20" viewBox="0 0 120 20">
          <path d="M9 2l7 2c0 6-1 11-7 14C3 15 2 10 2 4z" fill="#5da32d" stroke="#eef5e5" strokeWidth="1.500" />
          <path d="M11 5l-5 6h3l-1 4 5-6h-3z" fill="#fff" />
          <circle cx="34" cy="10" r="7.500" fill="#f0df16" />
          <path d="M41 7a7.500 7.500 0 0 1-11 9c5 0 9-2 11-9z" fill="#34a12f" />
          <path d="M34 6v8M30 10h8" stroke="#194c12" strokeWidth="2.200" />
          <path d="M53 7l4-3h9l-3 4z" fill="#eee" />
          <path d="M50 8h14v6H50z" fill="#aaa9ab" />
          <path d="M55 11l4 5 7-9" fill="none" stroke="#32bc48" strokeWidth="3" />
          <path d="M78 5h11v9H77V9M80 17h8M84 14v3M75 3v4h4V3M77 7v5" fill="none" stroke="#fff" strokeWidth="1.500" />
          <path d="M100 8h3l4-5v14l-4-5h-3z" fill="#fff" />
          <path d="M109 7q2 3 0 6M111 5q4 5 0 10" fill="none" stroke="#dedede" />
        </svg>
        <div className="w-[78px] text-center leading-[18px]">
          15:24
          <br />
          2016/5/12
        </div>
        <button aria-label="显示桌面" className="h-[39px] w-3.5 border border-[#bdbdc0] bg-linear-to-b from-[#a5a5aa] to-[#77777c]" />
      </div>
    </footer>
  );
}

export default function App() {
  return (
    <div className="relative flex h-screen flex-col overflow-hidden bg-[#161517] font-['Noto_Sans','Noto_Sans_CJK_SC',sans-serif]">
      <MenuBar />
      <OptionsBar />
      <div className="flex min-h-0 flex-1">
        <Toolbar />
        <DocumentArea />
        <Panels />
      </div>
      <ColorPicker />
      <FloatingWidgets />
      <Taskbar />
    </div>
  );
}
